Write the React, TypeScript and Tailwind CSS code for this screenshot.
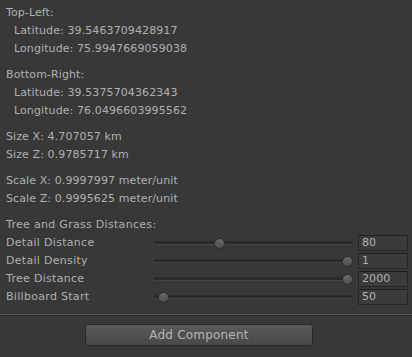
import React from 'react';

const SLIDERS = [
  { label: 'Detail Distance', value: 80, min: 0, max: 250, text: '80' },
  { label: 'Detail Density', value: 1, min: 0, max: 1, text: '1' },
  { label: 'Tree Distance', value: 2000, min: 0, max: 2000, text: '2000' },
  { label: 'Billboard Start', value: 50, min: 5, max: 2000, text: '50' },
];

function Line({ children, indent }: { children: React.ReactNode; indent?: boolean }) {
  return <div className={`h-[18px] leading-[18px] whitespace-nowrap ${indent ? 'pl-[8px]' : ''}`}>{children}</div>;
}

function SliderRow({ label, value, min, max, text }: (typeof SLIDERS)[number]) {
  const pct = (value - min) / (max - min);
  return (
    <div className="flex items-center h-[18px]">
      <div className="w-[148px] leading-[18px] whitespace-nowrap tracking-[0.3px]">{label}</div>
      <div className="relative w-[199px] h-[18px] flex items-center">
        <div className="w-full h-[4px] rounded-full bg-[#2a2a2a] border-b border-[#444444]" />
        <div
          className="absolute top-[4px] w-[11px] h-[11px] rounded-full border border-[#2c2c2c] bg-gradient-to-b from-[#6a6a6a] to-[#4e4e4e]"
          style={{ left: `${pct * 188}px` }}
        />
      </div>
      <div className="ml-[5px] w-[50px] h-[16px] border border-[#262626] border-t-[#1e1e1e] bg-[#3b3b3b] pl-[3px] leading-[14px] text-[11px]">
        {text}
      </div>
    </div>
  );
}

export default function App() {
  return (
    <div
      className="w-[412px] h-[357px] bg-[#383838] text-[#b0b0b0] text-[11px] tracking-[0.1px] overflow-hidden"
      style={{ fontFamily: '"DejaVu Sans", sans-serif' }}
    >
      <div className="pt-[4px] pl-[6px] pr-[4px] flex flex-col gap-[8px]">
        <div>
          <Line>Top-Left:</Line>
          <Line indent>Latitude: 39.5463709428917</Line>
          <Line indent>Longitude: 75.9947669059038</Line>
        </div>
        <div>
          <Line>Bottom-Right:</Line>
          <Line indent>Latitude: 39.5375704362343</Line>
          <Line indent>Longitude: 76.0496603995562</Line>
        </div>
        <div>
          <Line>Size X: 4.707057 km</Line>
          <Line>Size Z: 0.9785717 km</Line>
        </div>
        <div>
          <Line>Scale X: 0.9997997 meter/unit</Line>
          <Line>Scale Z: 0.9995625 meter/unit</Line>
        </div>
        <div>
          <div className="h-[18px] leading-[18px] whitespace-nowrap tracking-[0.3px]">Tree and Grass Distances:</div>
          {SLIDERS.map(s => (
            <SliderRow key={s.label} {...s} />
          ))}
        </div>
      </div>
      <div className="mt-[8px] border-t border-[#525252] border-b border-b-[#303030]" />
      <div className="mt-[8px] ml-[85px] w-[228px] h-[22px] rounded-[3px] border border-[#2a2a2a] bg-gradient-to-b from-[#5a5a5a] to-[#484848] flex items-center justify-center text-[12px] tracking-[0.2px] text-[#b4b4b4]">
        Add Component
      </div>
    </div>
  );
}
